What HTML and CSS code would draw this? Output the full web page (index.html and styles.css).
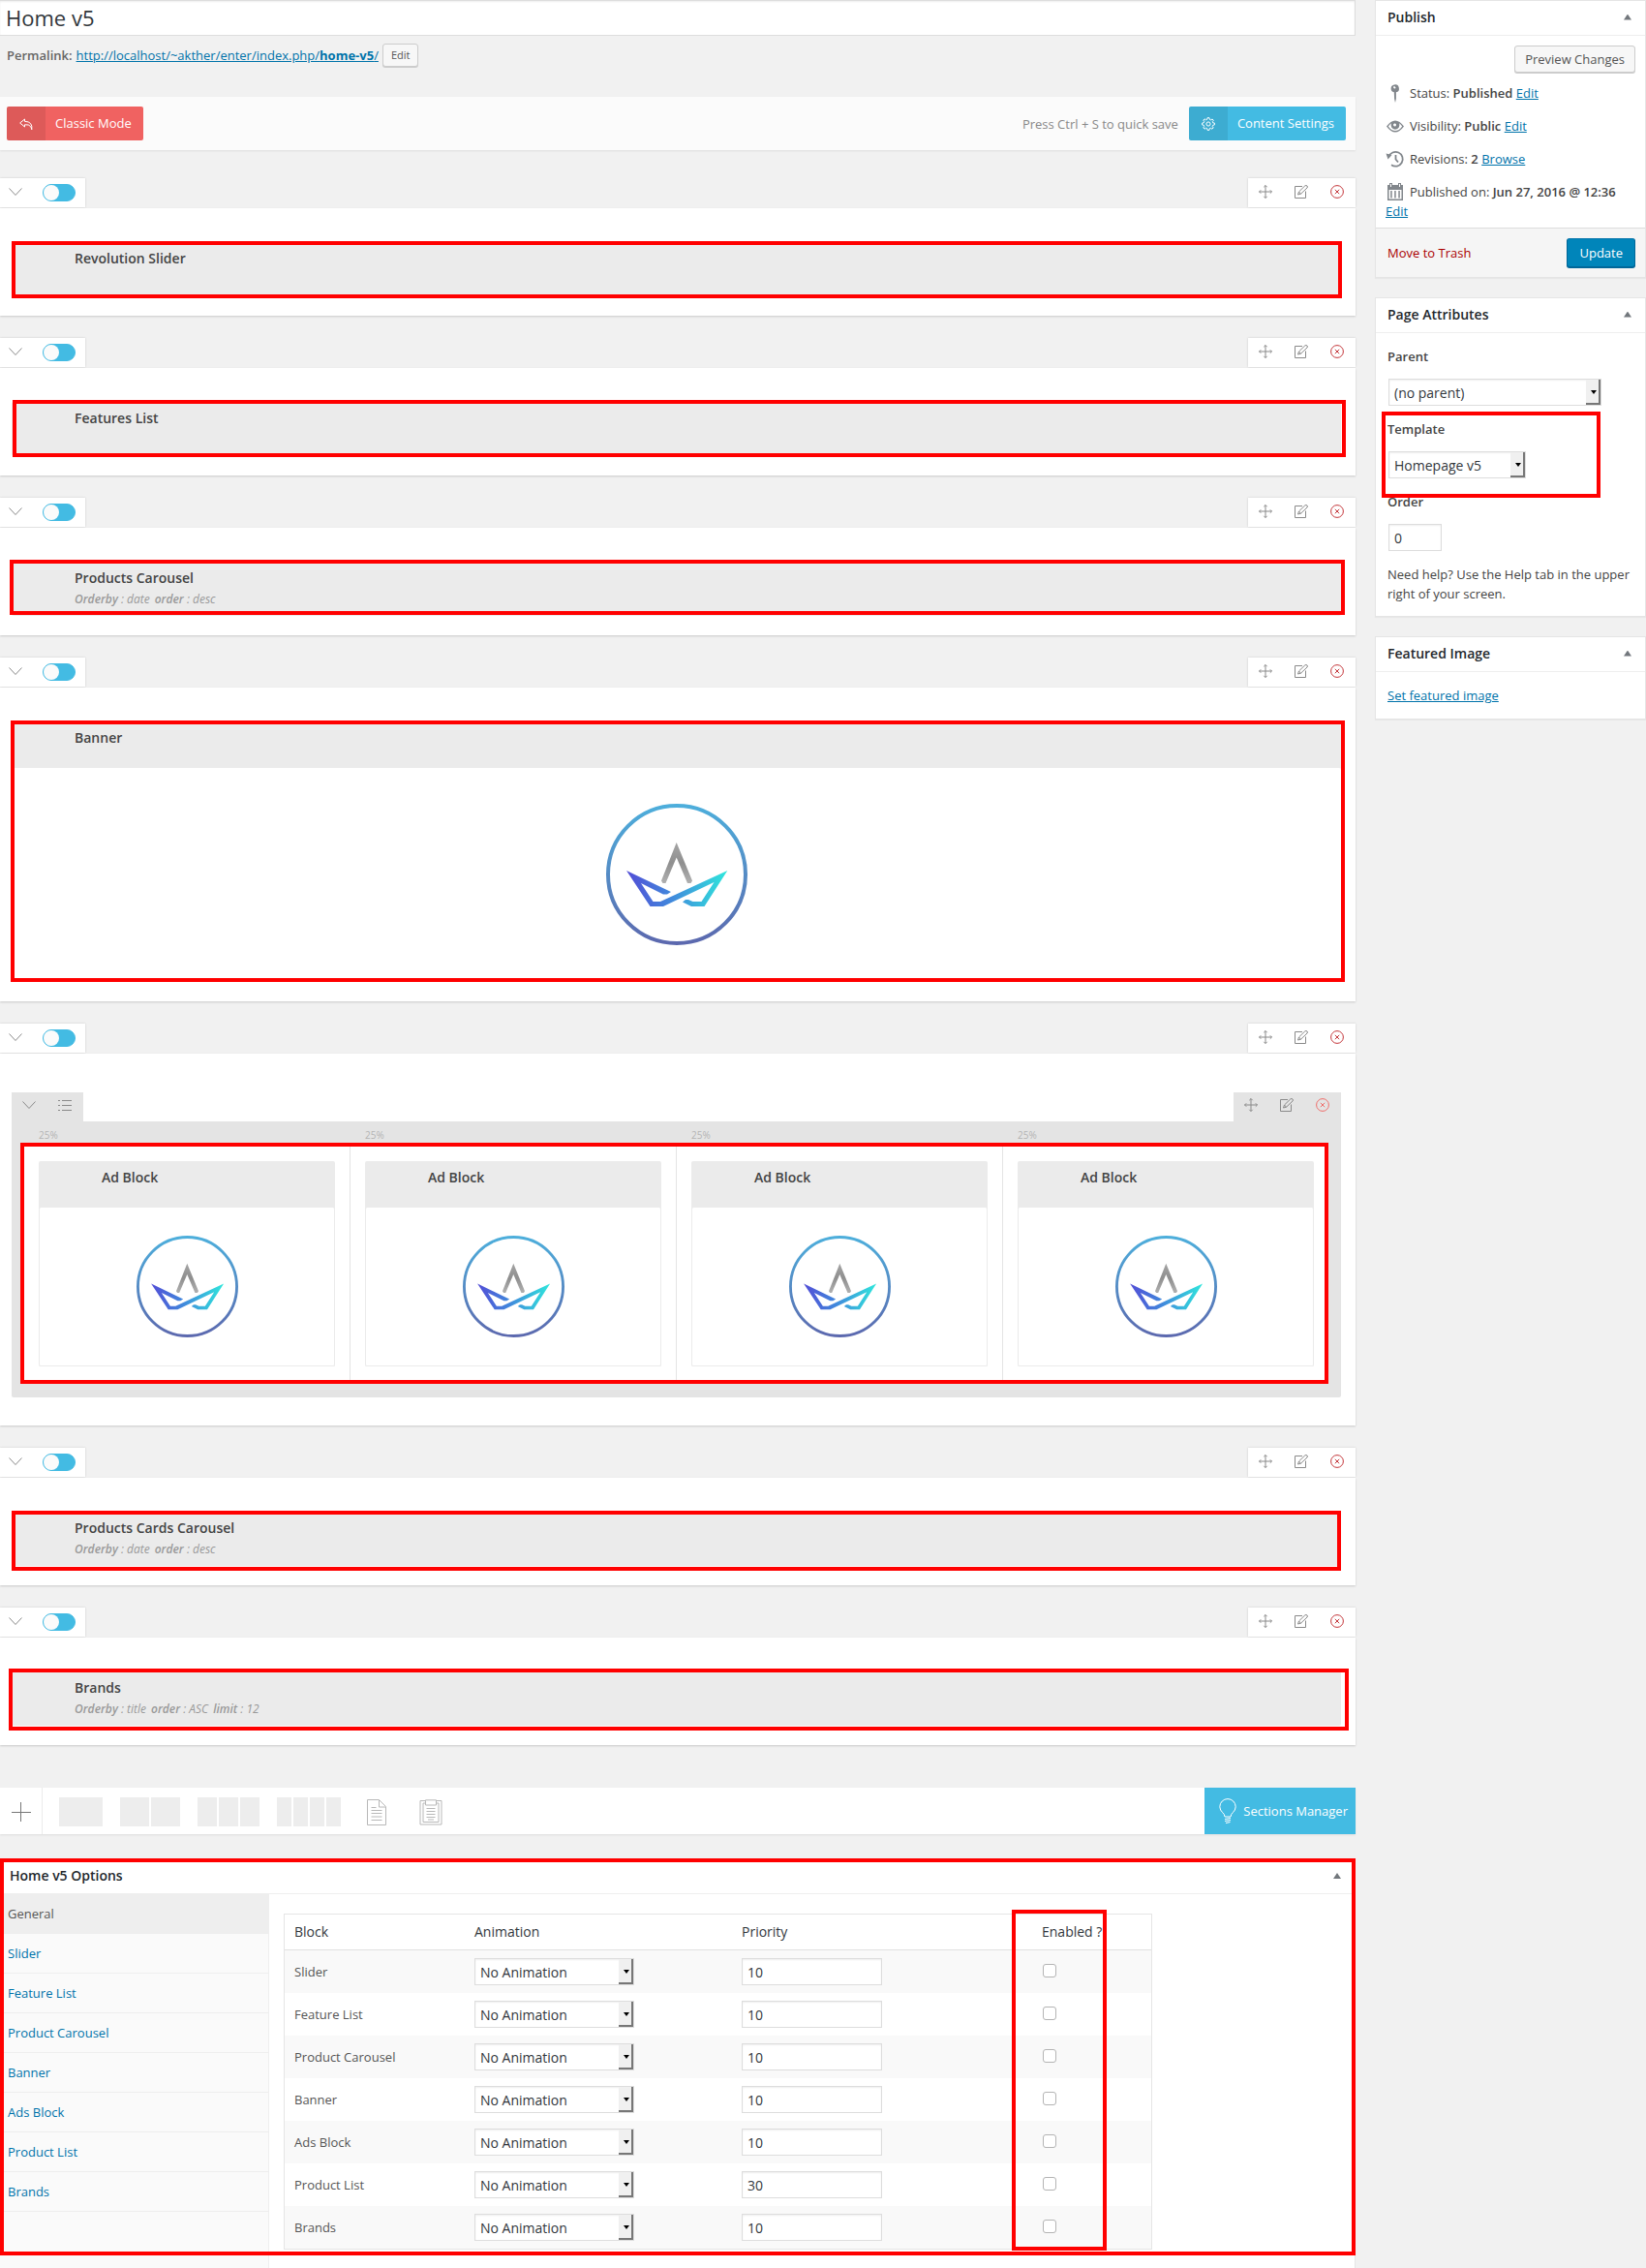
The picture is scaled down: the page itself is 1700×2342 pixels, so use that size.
FILE: index.html
```html
<!DOCTYPE html>
<html lang="en">
<head>
<meta charset="utf-8">
<meta name="viewport" content="width=device-width, initial-scale=1">
<title>Home v5</title>
<link rel="stylesheet" href="styles.css">
</head>
<body>
<svg class="sprite" aria-hidden="true">
  <defs>
    <linearGradient id="ring" x1="0" y1="0" x2="0" y2="146" gradientUnits="userSpaceOnUse"><stop offset="0" stop-color="#4dafdc"/><stop offset="1" stop-color="#5c68ae"/></linearGradient>
    <linearGradient id="hull" x1="21" y1="0" x2="125" y2="0" gradientUnits="userSpaceOnUse"><stop offset="0" stop-color="#524dd6"/><stop offset=".45" stop-color="#4189dc"/><stop offset="1" stop-color="#2fe6dc"/></linearGradient>
    <linearGradient id="mast" x1="0" y1="40" x2="0" y2="82" gradientUnits="userSpaceOnUse"><stop offset="0" stop-color="#a5a5a5"/><stop offset=".5" stop-color="#8f8f8f"/><stop offset="1" stop-color="#b0b0b0"/></linearGradient>
  </defs>
  <symbol id="i-logo" viewBox="0 0 146 146">
    <circle cx="73" cy="73" r="71" fill="none" stroke="url(#ring)" stroke-width="4"/>
    <path fill="url(#mast)" d="M72.7 40 57 79.500 58.500 82H61.500L72.700 55.500 84 82H87.500L89 79.500Z"/>
    <path fill="url(#hull)" d="M21 69 67 91 63 93.500H59L36 82 48.500 101H56L125.300 69 101.500 106H88L79 101.500 82 99H85L89.500 101H98.500L111.500 81 59 106H45.500Z"/>
  </symbol>
  <symbol id="i-chevron" viewBox="0 0 14 14"><path d="M.500 3.500 7 10.500 13.500 3.500"/></symbol>
  <symbol id="i-list" viewBox="0 0 14 14"><path d="M4 2.500H14M4 7.500H14M4 12.500H14M0 2.500H2M0 7.500H2M0 12.500H2"/></symbol>
  <symbol id="i-move" viewBox="0 0 14 14"><path d="M7 .500V13.500M.500 7H13.500M5.300 2.200 7 .500 8.700 2.200M5.300 11.800 7 13.500 8.700 11.800M2.200 5.300 .500 7 2.200 8.700M11.800 5.300 13.500 7 11.800 8.700"/></symbol>
  <symbol id="i-edit" viewBox="0 0 14 14"><path d="M8 1.500H.500V13.500H11.500V6.500M3.500 10 4.500 7 10.800 .900Q12 0 13 1T13 3L6.500 9.200ZM4.500 7 6.500 9.200"/></symbol>
  <symbol id="i-close" viewBox="0 0 14 14"><circle cx="7" cy="7" r="6.400"/><path d="M4.800 4.800 9.200 9.200M9.200 4.800 4.800 9.200"/></symbol>
  <symbol id="i-reply" viewBox="0 0 14 14"><path d="M5.500 2 .700 6 5.500 10V7.800Q10 7.300 11.500 9.500 12.500 11 12.800 12.800 14 4.500 5.500 4.300Z"/></symbol>
  <symbol id="i-gear" viewBox="0 0 14 14"><circle cx="7" cy="7" r="2.100"/><path d="M6 .700H8L8.400 2.400 9.600 2.900 11.100 2 12.300 3.300 11.300 4.600 11.700 5.800 13.400 6.100V7.900L11.700 8.300 11.200 9.500 12.200 10.900 10.900 12.200 9.500 11.300 8.300 11.700 7.900 13.400H6.100L5.700 11.700 4.500 11.200 3.100 12.200 1.800 10.900 2.700 9.500 2.300 8.300 .600 7.900V6.100L2.300 5.700 2.800 4.500 1.800 3.100 3.100 1.800 4.500 2.800 5.700 2.300Z"/></symbol>
  <symbol id="i-bulb" viewBox="0 0 18 27"><path d="M6 19C6 15 .800 14 .800 8.800A8.200 8.200 0 0 1 17.200 8.800C17.200 14 12 15 12 19ZM6 21.500 12 20.500M6 23.500 12 22.500M7 25.500 11.500 24.500"/></symbol>
  <symbol id="i-doc" viewBox="0 0 20 27"><path d="M.500 .500H12.500L19.500 7.500V26.500H.500ZM12.500 1V8H19M4.500 8.500H9.500M4.500 11.500H15.500M4.500 14.500H15.500M4.500 18H15.500M4.500 21.500H15.500"/></symbol>
  <symbol id="i-clip" viewBox="0 0 24 27"><path d="M6.500 1.500H1V26H23V1.500H17.500M6.500 4H4V23.500H20V4H17.500M6.500 .800H17.500V6H6.500ZM7.500 9.500H16.500M7.500 12.500H16.500M7.500 15.500H16.500M7.500 18.500H16.500M9 21H15"/></symbol>
  <symbol id="i-pin" viewBox="0 0 20 20"><path d="M9 1.500A3.900 3.900 0 1 1 10.900 9.200V16L10 20 9.100 16 8.800 9.200A3.900 3.900 0 0 1 9 1.500ZM9.200 3A1.200 1.200 0 1 0 10.500 4.200"/></symbol>
  <symbol id="i-eye" viewBox="0 0 20 20"><path fill-rule="evenodd" d="M1 10.500Q5.500 4.500 10 4.500T19 10.500Q14.500 16.500 10 16.500T1 10.500ZM2.800 10.500Q6 15 10 15T17.200 10.500Q15.500 8 14 7.200A4.500 4.500 0 1 1 6 7.200Q4.500 8 2.800 10.500ZM9.300 7.500A1.500 1.500 0 1 0 11 9.200 1.500 1.500 0 0 0 9.300 7.500Z"/></symbol>
  <symbol id="i-revisions" viewBox="0 0 20 20"><path fill="none" stroke="currentColor" stroke-width="1.800" d="M3.300 8A7.400 7.400 0 1 1 6 16.300M10.500 6V10.500L13 13.500"/><path d="M.500 4.500 6.500 6 2.500 10.500Z"/></symbol>
  <symbol id="i-calendar" viewBox="0 0 20 20"><path fill-rule="evenodd" d="M2 3H4V1H7V3H13V1H16V3H18V19H2ZM3.500 8V17.500H16.500V8ZM5.200 9H6.700V16.500H5.200ZM9.200 9H10.700V16.500H9.200ZM13.300 9H14.800V16.500H13.300ZM5 2V5H6V2ZM14 2V5H15V2Z"/></symbol>
</svg>

<div class="editor">
  <main class="content">
    <label class="sr-only" for="title">Title</label>
    <input class="title-input" id="title" type="text" value="Home v5">

    <div class="permalink">
      <strong>Permalink:</strong>
      <a href="#">http://localhost/~akther/enter/index.php/<b>home-v5</b>/</a>
      <button class="button button-small" type="button">Edit</button>
    </div>

    <div class="toolbar">
      <button class="tool-button tool-red" type="button"><span class="tool-icon"><svg class="icon"><use href="#i-reply"/></svg></span><span class="tool-text">Classic Mode</span></button>
      <span class="hint">Press Ctrl + S to quick save</span>
      <button class="tool-button tool-blue" type="button"><span class="tool-icon"><svg class="icon"><use href="#i-gear"/></svg></span><span class="tool-text">Content Settings</span></button>
    </div>

    <div class="sections">
      <section class="section">
        <header class="section-head">
          <div class="tab tab-left"><button class="icon-button" type="button" aria-label="Collapse"><svg class="icon"><use href="#i-chevron"/></svg></button><input class="toggle" type="checkbox" role="switch" aria-label="Toggle section"></div>
          <div class="tab"><button class="icon-button" type="button" aria-label="Move"><svg class="icon"><use href="#i-move"/></svg></button><button class="icon-button" type="button" aria-label="Edit"><svg class="icon"><use href="#i-edit"/></svg></button><button class="icon-button danger" type="button" aria-label="Delete"><svg class="icon"><use href="#i-close"/></svg></button></div>
        </header>
        <div class="section-body">
          <article class="block"><div class="block-head"><h3>Revolution Slider</h3></div></article>
          <span class="mark mark-revolution"></span>
        </div>
      </section>

      <section class="section">
        <header class="section-head">
          <div class="tab tab-left"><button class="icon-button" type="button" aria-label="Collapse"><svg class="icon"><use href="#i-chevron"/></svg></button><input class="toggle" type="checkbox" role="switch" aria-label="Toggle section"></div>
          <div class="tab"><button class="icon-button" type="button" aria-label="Move"><svg class="icon"><use href="#i-move"/></svg></button><button class="icon-button" type="button" aria-label="Edit"><svg class="icon"><use href="#i-edit"/></svg></button><button class="icon-button danger" type="button" aria-label="Delete"><svg class="icon"><use href="#i-close"/></svg></button></div>
        </header>
        <div class="section-body">
          <article class="block"><div class="block-head"><h3>Features List</h3></div></article>
          <span class="mark mark-features"></span>
        </div>
      </section>

      <section class="section">
        <header class="section-head">
          <div class="tab tab-left"><button class="icon-button" type="button" aria-label="Collapse"><svg class="icon"><use href="#i-chevron"/></svg></button><input class="toggle" type="checkbox" role="switch" aria-label="Toggle section"></div>
          <div class="tab"><button class="icon-button" type="button" aria-label="Move"><svg class="icon"><use href="#i-move"/></svg></button><button class="icon-button" type="button" aria-label="Edit"><svg class="icon"><use href="#i-edit"/></svg></button><button class="icon-button danger" type="button" aria-label="Delete"><svg class="icon"><use href="#i-close"/></svg></button></div>
        </header>
        <div class="section-body">
          <article class="block"><div class="block-head"><h3>Products Carousel</h3><p class="meta"><span><b>Orderby</b> : date</span><span><b>order</b> : desc</span></p></div></article>
          <span class="mark mark-carousel"></span>
        </div>
      </section>

      <section class="section">
        <header class="section-head">
          <div class="tab tab-left"><button class="icon-button" type="button" aria-label="Collapse"><svg class="icon"><use href="#i-chevron"/></svg></button><input class="toggle" type="checkbox" role="switch" aria-label="Toggle section"></div>
          <div class="tab"><button class="icon-button" type="button" aria-label="Move"><svg class="icon"><use href="#i-move"/></svg></button><button class="icon-button" type="button" aria-label="Edit"><svg class="icon"><use href="#i-edit"/></svg></button><button class="icon-button danger" type="button" aria-label="Delete"><svg class="icon"><use href="#i-close"/></svg></button></div>
        </header>
        <div class="section-body">
          <article class="block"><div class="block-head"><h3>Banner</h3></div><div class="block-preview banner-preview"><svg class="logo"><use href="#i-logo"/></svg></div></article>
          <span class="mark mark-banner"></span>
        </div>
      </section>

      <section class="section">
        <header class="section-head">
          <div class="tab tab-left"><button class="icon-button" type="button" aria-label="Collapse"><svg class="icon"><use href="#i-chevron"/></svg></button><input class="toggle" type="checkbox" role="switch" aria-label="Toggle section"></div>
          <div class="tab"><button class="icon-button" type="button" aria-label="Move"><svg class="icon"><use href="#i-move"/></svg></button><button class="icon-button" type="button" aria-label="Edit"><svg class="icon"><use href="#i-edit"/></svg></button><button class="icon-button danger" type="button" aria-label="Delete"><svg class="icon"><use href="#i-close"/></svg></button></div>
        </header>
        <div class="section-body section-body-row">
          <div class="row-head">
            <div class="row-tab"><button class="icon-button" type="button" aria-label="Collapse row"><svg class="icon"><use href="#i-chevron"/></svg></button><button class="icon-button" type="button" aria-label="Row layout"><svg class="icon"><use href="#i-list"/></svg></button></div>
            <div class="row-tab"><button class="icon-button" type="button" aria-label="Move row"><svg class="icon"><use href="#i-move"/></svg></button><button class="icon-button" type="button" aria-label="Edit row"><svg class="icon"><use href="#i-edit"/></svg></button><button class="icon-button danger-light" type="button" aria-label="Delete row"><svg class="icon"><use href="#i-close"/></svg></button></div>
          </div>
          <div class="row-box">
            <div class="columns">
              <div class="column"><span class="column-size">25%</span><div class="column-body"><article class="block block-framed"><div class="block-head"><h3>Ad Block</h3></div><div class="block-preview"><svg class="logo logo-small"><use href="#i-logo"/></svg></div></article></div></div>
              <div class="column"><span class="column-size">25%</span><div class="column-body"><article class="block block-framed"><div class="block-head"><h3>Ad Block</h3></div><div class="block-preview"><svg class="logo logo-small"><use href="#i-logo"/></svg></div></article></div></div>
              <div class="column"><span class="column-size">25%</span><div class="column-body"><article class="block block-framed"><div class="block-head"><h3>Ad Block</h3></div><div class="block-preview"><svg class="logo logo-small"><use href="#i-logo"/></svg></div></article></div></div>
              <div class="column"><span class="column-size">25%</span><div class="column-body"><article class="block block-framed"><div class="block-head"><h3>Ad Block</h3></div><div class="block-preview"><svg class="logo logo-small"><use href="#i-logo"/></svg></div></article></div></div>
            </div>
            <span class="mark mark-columns"></span>
          </div>
        </div>
      </section>

      <section class="section">
        <header class="section-head">
          <div class="tab tab-left"><button class="icon-button" type="button" aria-label="Collapse"><svg class="icon"><use href="#i-chevron"/></svg></button><input class="toggle" type="checkbox" role="switch" aria-label="Toggle section"></div>
          <div class="tab"><button class="icon-button" type="button" aria-label="Move"><svg class="icon"><use href="#i-move"/></svg></button><button class="icon-button" type="button" aria-label="Edit"><svg class="icon"><use href="#i-edit"/></svg></button><button class="icon-button danger" type="button" aria-label="Delete"><svg class="icon"><use href="#i-close"/></svg></button></div>
        </header>
        <div class="section-body">
          <article class="block"><div class="block-head"><h3>Products Cards Carousel</h3><p class="meta"><span><b>Orderby</b> : date</span><span><b>order</b> : desc</span></p></div></article>
          <span class="mark mark-cards"></span>
        </div>
      </section>

      <section class="section">
        <header class="section-head">
          <div class="tab tab-left"><button class="icon-button" type="button" aria-label="Collapse"><svg class="icon"><use href="#i-chevron"/></svg></button><input class="toggle" type="checkbox" role="switch" aria-label="Toggle section"></div>
          <div class="tab"><button class="icon-button" type="button" aria-label="Move"><svg class="icon"><use href="#i-move"/></svg></button><button class="icon-button" type="button" aria-label="Edit"><svg class="icon"><use href="#i-edit"/></svg></button><button class="icon-button danger" type="button" aria-label="Delete"><svg class="icon"><use href="#i-close"/></svg></button></div>
        </header>
        <div class="section-body">
          <article class="block"><div class="block-head"><h3>Brands</h3><p class="meta"><span><b>Orderby</b> : title</span><span><b>order</b> : ASC</span><span><b>limit</b> : 12</span></p></div></article>
          <span class="mark mark-brands"></span>
        </div>
      </section>
    </div>

    <div class="add-bar">
      <button class="add-button" type="button" aria-label="Add section"></button>
      <div class="layouts">
        <button class="layout layout-1" type="button" aria-label="One column"><i></i></button>
        <button class="layout layout-2" type="button" aria-label="Two columns"><i></i><i></i></button>
        <button class="layout layout-3" type="button" aria-label="Three columns"><i></i><i></i><i></i></button>
        <button class="layout layout-4" type="button" aria-label="Four columns"><i></i><i></i><i></i><i></i></button>
        <button class="layout layout-doc" type="button" aria-label="Page section"><svg width="20" height="27"><use href="#i-doc"/></svg></button>
        <button class="layout layout-clip" type="button" aria-label="Paste section"><svg width="24" height="27"><use href="#i-clip"/></svg></button>
      </div>
      <button class="manager" type="button"><svg width="18" height="27"><use href="#i-bulb"/></svg>Sections Manager</button>
    </div>

    <section class="options">
      <header class="box-head"><h2>Home v5 Options</h2><button class="handle" type="button" aria-label="Toggle panel"></button></header>
      <div class="options-body">
        <nav class="options-nav">
          <a class="active" href="#">General</a><a href="#">Slider</a><a href="#">Feature List</a><a href="#">Product Carousel</a><a href="#">Banner</a><a href="#">Ads Block</a><a href="#">Product List</a><a href="#">Brands</a>
        </nav>
        <div class="options-pane">
          <table class="options-table">
            <colgroup><col class="col-block"><col class="col-animation"><col class="col-priority"><col></colgroup>
            <thead><tr><th>Block</th><th>Animation</th><th>Priority</th><th>Enabled ?</th></tr></thead>
            <tbody>
              <tr><td>Slider</td><td><span class="select select-anim"><select aria-label="Slider animation"><option>No Animation</option></select></span></td><td><input class="field" type="text" value="10" aria-label="Slider priority"></td><td><input class="check" type="checkbox" aria-label="Enable Slider"></td></tr>
              <tr><td>Feature List</td><td><span class="select select-anim"><select aria-label="Feature List animation"><option>No Animation</option></select></span></td><td><input class="field" type="text" value="10" aria-label="Feature List priority"></td><td><input class="check" type="checkbox" aria-label="Enable Feature List"></td></tr>
              <tr><td>Product Carousel</td><td><span class="select select-anim"><select aria-label="Product Carousel animation"><option>No Animation</option></select></span></td><td><input class="field" type="text" value="10" aria-label="Product Carousel priority"></td><td><input class="check" type="checkbox" aria-label="Enable Product Carousel"></td></tr>
              <tr><td>Banner</td><td><span class="select select-anim"><select aria-label="Banner animation"><option>No Animation</option></select></span></td><td><input class="field" type="text" value="10" aria-label="Banner priority"></td><td><input class="check" type="checkbox" aria-label="Enable Banner"></td></tr>
              <tr><td>Ads Block</td><td><span class="select select-anim"><select aria-label="Ads Block animation"><option>No Animation</option></select></span></td><td><input class="field" type="text" value="10" aria-label="Ads Block priority"></td><td><input class="check" type="checkbox" aria-label="Enable Ads Block"></td></tr>
              <tr><td>Product List</td><td><span class="select select-anim"><select aria-label="Product List animation"><option>No Animation</option></select></span></td><td><input class="field" type="text" value="30" aria-label="Product List priority"></td><td><input class="check" type="checkbox" aria-label="Enable Product List"></td></tr>
              <tr><td>Brands</td><td><span class="select select-anim"><select aria-label="Brands animation"><option>No Animation</option></select></span></td><td><input class="field" type="text" value="10" aria-label="Brands priority"></td><td><input class="check" type="checkbox" aria-label="Enable Brands"></td></tr>
            </tbody>
          </table>
          <span class="mark mark-enabled"></span>
        </div>
      </div>
      <span class="mark mark-options"></span>
    </section>
  </main>

  <aside class="sidebar">
    <section class="box">
      <header class="box-head"><h2>Publish</h2><button class="handle" type="button" aria-label="Toggle panel"></button></header>
      <div class="preview-row"><button class="button" type="button">Preview Changes</button></div>
      <ul class="publish-info">
        <li><svg class="dash"><use href="#i-pin"/></svg>Status: <b>Published</b> <a href="#">Edit</a></li>
        <li><svg class="dash"><use href="#i-eye"/></svg>Visibility: <b>Public</b> <a href="#">Edit</a></li>
        <li><svg class="dash"><use href="#i-revisions"/></svg>Revisions: <b>2</b> <a href="#">Browse</a></li>
        <li><svg class="dash"><use href="#i-calendar"/></svg>Published on: <b>Jun 27, 2016 @ 12:36</b> <a href="#">Edit</a></li>
      </ul>
      <footer class="publish-foot"><a class="trash" href="#">Move to Trash</a><button class="button button-primary" type="button">Update</button></footer>
    </section>

    <section class="box">
      <header class="box-head"><h2>Page Attributes</h2><button class="handle" type="button" aria-label="Toggle panel"></button></header>
      <div class="attributes">
        <label for="parent">Parent</label>
        <span class="select select-parent"><select id="parent"><option>(no parent)</option></select></span>
        <label for="template">Template</label>
        <span class="select select-template"><select id="template"><option>Homepage v5</option></select></span>
        <label for="order">Order</label>
        <input class="field field-order" id="order" type="text" value="0">
        <p>Need help? Use the Help tab in the upper right of your screen.</p>
        <span class="mark mark-template"></span>
      </div>
    </section>

    <section class="box">
      <header class="box-head"><h2>Featured Image</h2><button class="handle" type="button" aria-label="Toggle panel"></button></header>
      <div class="featured"><a href="#">Set featured image</a></div>
    </section>
  </aside>
</div>
</body>
</html>
```
FILE: styles.css
```css
*, *::before, *::after { box-sizing: border-box; }

body {
  margin: 0;
  background: #f1f1f1;
  color: #444;
  font: 13px/20px "Open Sans", "Noto Sans", sans-serif;
}

h2, h3, p, ul { margin: 0; padding: 0; }
ul { list-style: none; }
b, strong { font-weight: 600; }
a { color: #0073aa; }
button, input, select { margin: 0; font-family: inherit; }
button { cursor: pointer; }
svg { display: block; }

.sprite { position: absolute; width: 0; height: 0; }
.sr-only { position: absolute; width: 1px; height: 1px; overflow: hidden; clip-path: inset(50%); }

.editor {
  display: grid;
  grid-template-columns: minmax(0, 1fr) 280px;
  gap: 20px;
  align-items: start;
}

/* Title and permalink */
.title-input {
  display: block;
  width: 100%;
  height: 37px;
  padding: 0 6px 2px;
  border: 1px solid #ddd;
  border-left-width: 0;
  background: #fff;
  box-shadow: inset 0 1px 2px rgba(0, 0, 0, .07);
  color: #32373c;
  font-size: 22px;
  line-height: 32px;
}

.permalink {
  display: flex;
  align-items: center;
  gap: 4px;
  height: 63px;
  padding: 4px 7px 28px;
  color: #666;
}
.permalink b { font-weight: 700; }

.button {
  height: 28px;
  padding: 0 10px;
  border: 1px solid #ccc;
  border-radius: 3px;
  background: #f7f7f7;
  box-shadow: 0 1px 0 #ccc;
  color: #555;
  font-size: 13px;
  line-height: 26px;
}
.button-small { height: 24px; padding: 0 8px; font-size: 11px; line-height: 22px; }
.button-primary {
  height: 30px;
  padding: 0 12px;
  border-color: #0073aa #006799 #006799;
  background: #0085ba;
  box-shadow: 0 1px 0 #006799;
  color: #fff;
  font-weight: 500;
}

/* Builder toolbar */
.toolbar {
  display: flex;
  align-items: center;
  height: 55px;
  padding: 0 10px 0 7px;
  background: #fbfbfb;
  box-shadow: 0 1px 2px rgba(0, 0, 0, .08);
}
.hint { margin-left: auto; padding-right: 11px; color: #888; }
.tool-button {
  display: flex;
  height: 35px;
  padding: 0;
  border: 0;
  border-radius: 2px;
  overflow: hidden;
  color: #fff;
  font-size: 13px;
  font-weight: 500;
  line-height: 35px;
}
.tool-icon { display: grid; place-items: center; width: 40px; background: rgba(0, 0, 0, .08); }
.tool-text { padding: 0 12px 0 10px; }
.tool-red { background: #f06261; }
.tool-blue { background: #43bbe3; }

.icon { width: 14px; height: 14px; fill: none; stroke: currentColor; stroke-width: 1; }

/* Sections */
.sections { display: grid; gap: 23px; padding: 29px 0 44px; }
.section-head { display: flex; justify-content: space-between; height: 31px; padding-bottom: 1px; }
.tab {
  display: flex;
  align-items: center;
  background: #fff;
  box-shadow: 0 0 2px rgba(0, 0, 0, .16);
}
.tab-left { gap: 12px; width: 88px; padding-right: 10px; }
.tab-left .icon-button { width: 32px; }
.icon-button {
  display: grid;
  place-items: center;
  width: 37px;
  height: 26px;
  padding: 0 1px 2px 0;
  border: 0;
  background: none;
  color: #8a8a8a;
}
.danger { color: #c4373b; }
.danger-light { color: #ef6f6c; }

.toggle {
  width: 34px;
  height: 18px;
  border: 1px solid #43bbe3;
  border-radius: 9px;
  background: #43bbe3;
  appearance: none;
}
.toggle::before {
  content: "";
  display: block;
  width: 16px;
  height: 16px;
  border-radius: 50%;
  background: #fbfbfb;
}

.section-body {
  position: relative;
  padding: 35px 15px 20px 12px;
  background: #fff;
  box-shadow: 0 1px 2px rgba(0, 0, 0, .16);
}
.section-body-row { padding-top: 40px; padding-bottom: 29px; }

.block { min-height: 56px; border-radius: 2px; background: #ebebeb; }
.block-head { height: 48px; padding: 7px 0 0 65px; }
.block-head h3 { color: #444; font-size: 14px; font-weight: 600; line-height: 20px; }
.meta { display: flex; gap: 5px; color: #999; font-size: 12px; font-style: italic; line-height: 24px; }
.block-preview {
  display: grid;
  place-items: center;
  height: 164px;
  border: solid #ebebeb;
  border-width: 0 1px 1px;
  border-radius: 2px;
  background: #fff;
}
.banner-preview { height: 221px; padding-bottom: 2px; border-width: 0; }
.logo { width: 146px; height: 146px; }
.logo-small { width: 105px; height: 105px; }

/* Row of columns */
.row-head { display: flex; justify-content: space-between; }
.row-tab { display: flex; align-items: center; height: 30px; padding-bottom: 2px; background: #e4e4e4; }
.row-box { position: relative; padding: 4px 12px 15px 13px; border-radius: 0 0 2px 2px; background: #e4e4e4; }
.columns { display: grid; grid-template-columns: repeat(4, 1fr); }
.column-size { display: block; padding-left: 15px; color: #b4b4b4; font-size: 10px; line-height: 20px; }
.column-body { height: 246px; padding: 17px 15px; border-right: 1px solid #e4e4e4; background: #fff; }

/* Bottom bar */
.add-bar {
  display: flex;
  align-items: center;
  height: 48px;
  margin-bottom: 25px;
  background: #fff;
  box-shadow: 0 1px 2px rgba(0, 0, 0, .08);
}
.add-button {
  width: 44px;
  height: 48px;
  padding: 2px 0 0;
  border: 0;
  border-right: 1px solid #ebebeb;
  background:
    linear-gradient(#777, #777) 50% 50% / 20px 1px no-repeat content-box,
    linear-gradient(#777, #777) 50% 50% / 1px 20px no-repeat content-box;
  background-origin: content-box;
}
.layouts { display: flex; align-items: center; gap: 18px; padding: 2px 0 0 17px; }
.layout { display: flex; gap: 2px; padding: 0; border: 0; background: none; }
.layout i { height: 30px; background: #ededed; }
.layout-1 i { width: 45px; }
.layout-2 i { width: 30px; }
.layout-3 i { width: 20px; }
.layout-4 i { width: 15px; }
.layout svg { fill: none; stroke: #b8b8b8; stroke-width: 1; }
.layout-doc { margin-left: 9px; }
.layout-clip { margin-left: 16px; }
.manager {
  display: flex;
  align-items: center;
  gap: 7px;
  height: 48px;
  margin-left: auto;
  padding: 0 8px 0 15px;
  border: 0;
  background: #43bbe3;
  color: #fff;
  font-size: 13px;
  font-weight: 500;
}
.manager svg { fill: none; stroke: #fff; stroke-width: 1; }

/* Panels */
.box { border: 1px solid #e5e5e5; background: #fff; box-shadow: 0 1px 1px rgba(0, 0, 0, .04); }
.sidebar { display: grid; gap: 20px; }
.box-head {
  display: flex;
  align-items: center;
  justify-content: space-between;
  height: 36px;
  padding: 0 14px 2px 12px;
  border-bottom: 1px solid #eee;
}
.box-head h2 { color: #23282d; font-size: 14px; font-weight: 600; line-height: 20px; }
.handle {
  width: 8px;
  height: 6px;
  padding: 0;
  border: 0;
  background: #72777c;
  clip-path: polygon(50% 0, 100% 100%, 0 100%);
}

.preview-row { display: flex; justify-content: flex-end; padding: 10px 10px 4px; }
.publish-info li { padding: 7px 10px; }
.dash { display: inline-block; width: 20px; height: 20px; margin-right: 5px; vertical-align: top; fill: #82878c; color: #82878c; }
.publish-foot {
  display: flex;
  align-items: center;
  justify-content: space-between;
  height: 51px;
  padding: 0 10px 0 12px;
  border-top: 1px solid #ddd;
  background: #f5f5f5;
}
.trash { color: #a00; text-decoration: none; }

.attributes { position: relative; display: flex; flex-direction: column; align-items: flex-start; padding: 14px 12px 13px; }
.attributes label { font-weight: 600; }
.attributes .select, .attributes .field { margin: 13px 1px 14px; }
.featured { padding: 14px 12px; }

/* Form controls */
.select { position: relative; display: block; }
.select select, .field {
  display: block;
  width: 100%;
  height: 28px;
  padding: 0 5px;
  border: 1px solid #ddd;
  border-radius: 0;
  background: #fff;
  box-shadow: inset 0 1px 2px rgba(0, 0, 0, .07);
  color: #32373c;
  font-size: 14px;
  appearance: none;
}
.select::before {
  content: "";
  position: absolute;
  top: 1px;
  right: 1px;
  bottom: 1px;
  width: 15px;
  border: solid #777;
  border-width: 0 2px 2px 0;
  background: #f0f0f0;
  pointer-events: none;
}
.select::after {
  content: "";
  position: absolute;
  top: 12px;
  right: 5px;
  width: 6px;
  height: 4px;
  background: #000;
  clip-path: polygon(0 0, 100% 0, 50% 100%);
  pointer-events: none;
}
.select-parent { width: 220px; }
.select-template { width: 142px; }
.select-anim { width: 165px; }
.select .field, .field { width: 145px; }
.field-order { width: 55px; }
.check {
  display: block;
  width: 14px;
  height: 14px;
  margin: 0 1px 2px;
  border: 1px solid #b4b4b4;
  border-radius: 3px;
  background: #fff;
  appearance: none;
}

/* Options panel */
.options { position: relative; border-right: 1px solid #e5e5e5; background: #fff; }
.options .box-head { height: 37px; padding: 0 14px 0 10px; }
.options-body { display: flex; }
.options-nav { flex: 0 0 278px; border-right: 1px solid #eee; background: #fafafa; }
.options-nav a { display: block; padding: 10px 8px; border-bottom: 1px solid #eee; text-decoration: none; }
.options-nav .active { background: #eee; color: #555; }
.options-pane { position: relative; flex: 1; padding: 20px 15px; }
.options-table {
  width: 897px;
  max-width: 100%;
  border: 1px solid #e5e5e5;
  border-collapse: separate;
  border-spacing: 0;
  table-layout: fixed;
}
.col-block { width: 186px; }
.col-animation { width: 276px; }
.col-priority { width: 310px; }
.options-table th {
  height: 37px;
  padding: 0 10px;
  border-bottom: 1px solid #e1e1e1;
  color: #32373c;
  font-size: 14px;
  font-weight: 400;
  text-align: left;
}
.options-table td { height: 44px; padding: 0 10px; color: #555; vertical-align: middle; }
.options-table tbody tr:nth-child(odd) { background: #f9f9f9; }

/* Red highlight frames laid over the screen */
.mark { position: absolute; border: 4px solid #f00; pointer-events: none; }
.mark-revolution { inset: 34px 14px 18px 12px; }
.mark-features { inset: 33px 10px 19px 13px; }
.mark-carousel { inset: 33px 11px 21px 10px; }
.mark-banner { inset: 34px 11px 20px 11px; }
.mark-columns { inset: 22px 13px 14px 9px; }
.mark-cards { inset: 34px 15px 15px 12px; }
.mark-brands { inset: 32px 7px 15px 9px; }
.mark-template { top: 81px; left: 6px; width: 226px; height: 89px; }
.mark-enabled { top: 16px; left: 767px; width: 98px; height: 352px; }
.mark-options { inset: 0 -1px 14px 0; }
```
